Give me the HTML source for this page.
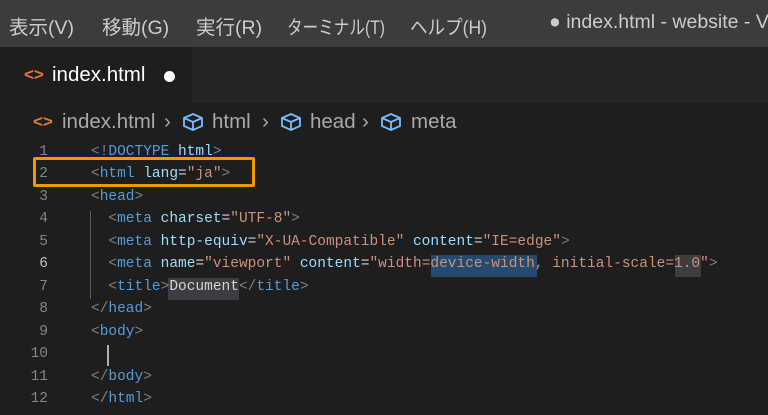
<!DOCTYPE html>
<html><head><style>
body{margin:0;width:768px;height:415px;background:#1e1e1e;overflow:hidden;position:relative;font-family:"Liberation Sans","Noto Sans CJK JP",sans-serif}
.menu{position:absolute;left:0;top:0;width:768px;height:47px;background:#3c3c3c;color:#cccccc;font-size:19.5px}
.menu span{position:absolute;top:11px;white-space:nowrap;transform-origin:left center}
.tabs{position:absolute;left:0;top:47px;width:768px;height:56px;background:#252526}
.tab{position:absolute;left:0;top:0;width:192px;height:56px;background:#1e1e1e}
.bc{position:absolute;top:110px;left:0;color:#a9a9a9;font-size:20.5px;white-space:nowrap}
.ln{position:absolute;left:0;width:48px;text-align:right;color:#858585;font-family:"Liberation Mono",monospace;font-size:14.5px}
.code{position:absolute;left:91px;font-family:"Liberation Mono",monospace;font-size:14.5px;color:#d4d4d4;white-space:pre}
.g{color:#808080}.t{color:#569cd6}.a{color:#9cdcfe}.s{color:#ce9178}
</style></head><body>
<div class="menu">
<span style="left:9px">表示(V)</span><span style="left:102px">移動(G)</span><span style="left:196px">実行(R)</span><span style="left:287px;transform:scaleX(0.8)">ターミナル(T)</span><span style="left:410px;transform:scaleX(0.9)">ヘルプ(H)</span><span style="left:549px">● index.html - website - Vi</span>
</div>
<div class="tabs"><div class="tab">
<span style="position:absolute;left:24px;top:18px;color:#e37933;font-size:17px;font-weight:bold">&lt;&gt;</span>
<span style="position:absolute;left:52px;top:16px;color:#fff;font-size:20.5px">index.html</span>
<span style="position:absolute;left:164px;top:24px;width:11px;height:11px;border-radius:50%;background:#fff"></span>
</div></div>
<div class="bc">
<span style="position:absolute;left:33px;color:#e37933;font-size:17px;font-weight:bold;top:2px">&lt;&gt;</span>
<span style="position:absolute;left:62px">index.html</span>
<span style="position:absolute;left:164px">›</span>
<svg style="position:absolute;left:182px;top:2px" width="22" height="20" viewBox="0 0 22 20" fill="none" stroke="#75beff" stroke-width="1.8"><path d="M11 2 L20 6 L20 14 L11 18 L2 14 L2 6 Z M2 6 L11 10 L20 6 M11 10 L11 18"/></svg>
<span style="position:absolute;left:212px">html</span>
<span style="position:absolute;left:262px">›</span>
<svg style="position:absolute;left:280px;top:2px" width="22" height="20" viewBox="0 0 22 20" fill="none" stroke="#75beff" stroke-width="1.8"><path d="M11 2 L20 6 L20 14 L11 18 L2 14 L2 6 Z M2 6 L11 10 L20 6 M11 10 L11 18"/></svg>
<span style="position:absolute;left:310px">head</span>
<span style="position:absolute;left:362px">›</span>
<svg style="position:absolute;left:380px;top:2px" width="22" height="20" viewBox="0 0 22 20" fill="none" stroke="#75beff" stroke-width="1.8"><path d="M11 2 L20 6 L20 14 L11 18 L2 14 L2 6 Z M2 6 L11 10 L20 6 M11 10 L11 18"/></svg>
<span style="position:absolute;left:411px;width:60px">meta</span>
</div>
<div style="position:absolute;left:431px;top:255px;width:106px;height:22px;background:#264f78;opacity:.9"></div>
<div style="position:absolute;left:675px;top:255px;width:26px;height:22px;background:#3a3d41"></div>
<div style="position:absolute;left:168px;top:278px;width:71px;height:22px;background:#3a3d41"></div>
<div style="position:absolute;left:90px;top:211px;width:1px;height:88px;background:#5a5a5a"></div>
<div style="position:absolute;left:107px;top:345px;width:2px;height:21px;background:#aeafad"></div>
<div id="c"></div>
<div style="position:absolute;left:33px;top:157px;width:216px;height:24px;border:3px solid #f39800;border-radius:2px"></div>
<script>
var L=[
'<span class="g">&lt;!</span><span class="t">DOCTYPE</span> <span class="a">html</span><span class="g">&gt;</span>',
'<span class="g">&lt;</span><span class="t">html</span> <span class="a">lang</span>=<span class="s">"ja"</span><span class="g">&gt;</span>',
'<span class="g">&lt;</span><span class="t">head</span><span class="g">&gt;</span>',
'  <span class="g">&lt;</span><span class="t">meta</span> <span class="a">charset</span>=<span class="s">"UTF-8"</span><span class="g">&gt;</span>',
'  <span class="g">&lt;</span><span class="t">meta</span> <span class="a">http-equiv</span>=<span class="s">"X-UA-Compatible"</span> <span class="a">content</span>=<span class="s">"IE=edge"</span><span class="g">&gt;</span>',
'  <span class="g">&lt;</span><span class="t">meta</span> <span class="a">name</span>=<span class="s">"viewport"</span> <span class="a">content</span>=<span class="s">"width=device-width, initial-scale=1.0"</span><span class="g">&gt;</span>',
'  <span class="g">&lt;</span><span class="t">title</span><span class="g">&gt;</span>Document<span class="g">&lt;/</span><span class="t">title</span><span class="g">&gt;</span>',
'<span class="g">&lt;/</span><span class="t">head</span><span class="g">&gt;</span>',
'<span class="g">&lt;</span><span class="t">body</span><span class="g">&gt;</span>',
'',
'<span class="g">&lt;/</span><span class="t">body</span><span class="g">&gt;</span>',
'<span class="g">&lt;/</span><span class="t">html</span><span class="g">&gt;</span>'];
var h='';
for(var i=0;i<12;i++){var t=144+i*22.45;
h+='<div class="ln" style="top:'+t+'px;'+(i==5?'color:#c6c6c6':'')+'">'+(i+1)+'</div><div class="code" style="top:'+t+'px">'+L[i]+'</div>';}
document.getElementById('c').innerHTML=h;
</script>
</body></html>
